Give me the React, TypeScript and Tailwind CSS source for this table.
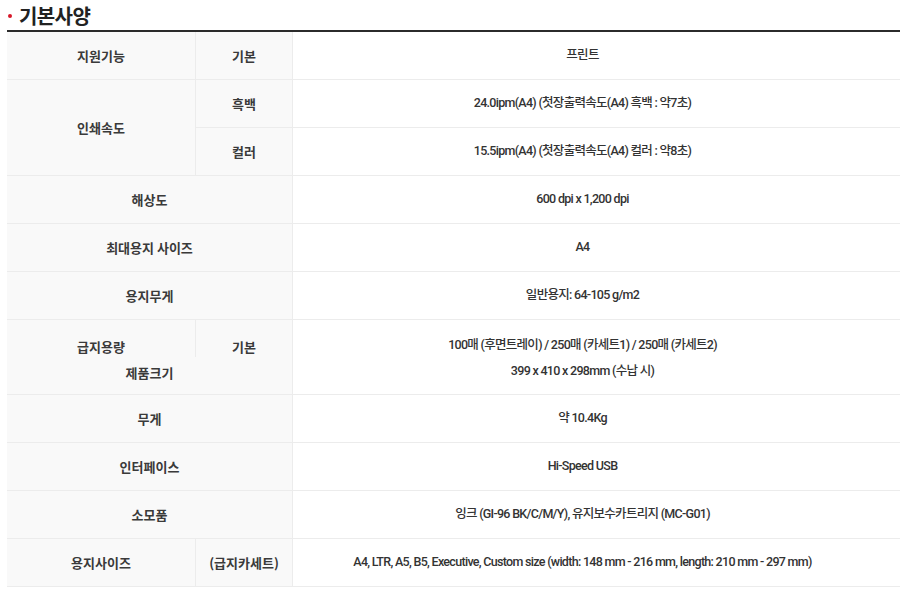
import React from "react";

const font = { fontFamily: '"Noto Sans CJK KR", "Noto Sans", sans-serif' };
const valueFont = { fontFamily: 'Roboto, "Noto Sans CJK KR", sans-serif' };

type Row = { label: string; value: string };

const fullRows: Row[] = [
  { label: "해상도", value: "600 dpi x 1,200 dpi" },
  { label: "최대용지 사이즈", value: "A4" },
  { label: "용지무게", value: "일반용지: 64-105 g/m2" },
];

const lowerRows: Row[] = [
  { label: "무게", value: "약 10.4Kg" },
  { label: "인터페이스", value: "Hi-Speed USB" },
  { label: "소모품", value: "잉크 (GI-96 BK/C/M/Y), 유지보수카트리지 (MC-G01)" },
];

const labelCls = "flex items-center justify-center bg-[#f9f9f9] text-[13px] font-bold text-[#3a3a3a]";
const valueCls = "flex flex-1 items-center justify-center pr-[28px] text-[12.5px] font-medium text-[#333] tracking-[-0.7px]";

function FullRow({ row }: { row: Row }) {
  return (
    <div className="flex h-[48px] border-b border-[#ececec]">
      <div className={`${labelCls} w-[286px] border-r border-[#ececec]`}>{row.label}</div>
      <div className={valueCls} style={valueFont}>{row.value}</div>
    </div>
  );
}

function SubRow({ label, sub, value }: { label: string; sub: string; value: string }) {
  return (
    <div className="flex h-[48px] border-b border-[#ececec]">
      <div className={`${labelCls} w-[189px] border-r border-[#ececec]`}>{label}</div>
      <div className={`${labelCls} w-[97px] border-r border-[#ececec]`}>{sub}</div>
      <div className={valueCls} style={valueFont}>{value}</div>
    </div>
  );
}

export default function App() {
  return (
    <div className="w-[900px] h-[589px] bg-white overflow-hidden" style={font}>
      <div className="flex h-[30px] items-center pl-[8px] pt-[1px]">
        <span className="mr-[7px] h-[4px] w-[4px] rounded-full bg-[#d7182a]" />
        <h2 className="text-[20px] font-bold text-[#222] tracking-[-0.6px]">기본사양</h2>
      </div>
      <div className="ml-[7px] border-t-2 border-[#2b2b2b]">
        <SubRow label="지원기능" sub="기본" value="프린트" />

        <div className="flex h-[96px] border-b border-[#ececec]">
          <div className={`${labelCls} w-[189px] border-r border-[#ececec]`}>인쇄속도</div>
          <div className="flex flex-1 flex-col">
            <div className="flex h-[48px] border-b border-[#ececec]">
              <div className={`${labelCls} w-[97px] border-r border-[#ececec]`}>흑백</div>
              <div className={valueCls} style={valueFont}>24.0ipm(A4) (첫장출력속도(A4) 흑백 : 약7초)</div>
            </div>
            <div className="flex h-[47px]">
              <div className={`${labelCls} w-[97px] border-r border-[#ececec]`}>컬러</div>
              <div className={valueCls} style={valueFont}>15.5ipm(A4) (첫장출력속도(A4) 컬러 : 약8초)</div>
            </div>
          </div>
        </div>

        {fullRows.map((r) => (
          <FullRow key={r.label} row={r} />
        ))}

        <div className="flex h-[75px] border-b border-[#ececec]">
          <div className="flex w-[286px] flex-col bg-[#f9f9f9] border-r border-[#ececec] text-[13px] font-bold text-[#3a3a3a]">
            <div className="flex h-[37px]">
              <div className="flex w-[189px] items-end justify-center border-r border-[#ececec] pb-[1px]">급지용량</div>
              <div className="flex flex-1 items-end justify-center pb-[1px]">기본</div>
            </div>
            <div className="flex flex-1 items-start justify-center pt-[6px]">제품크기</div>
          </div>
          <div
            className="flex flex-1 flex-col items-center justify-center gap-[7px] pr-[28px] pt-[2px] text-[12.5px] font-medium text-[#333] tracking-[-0.7px]"
            style={valueFont}
          >
            <div>100매 (후면트레이) / 250매 (카세트1) / 250매 (카세트2)</div>
            <div>399 x 410 x 298mm (수납 시)</div>
          </div>
        </div>

        {lowerRows.map((r) => (
          <FullRow key={r.label} row={r} />
        ))}

        <SubRow
          label="용지사이즈"
          sub="(급지카세트)"
          value="A4, LTR, A5, B5, Executive, Custom size (width: 148 mm - 216 mm, length: 210 mm - 297 mm)"
        />
      </div>
    </div>
  );
}
